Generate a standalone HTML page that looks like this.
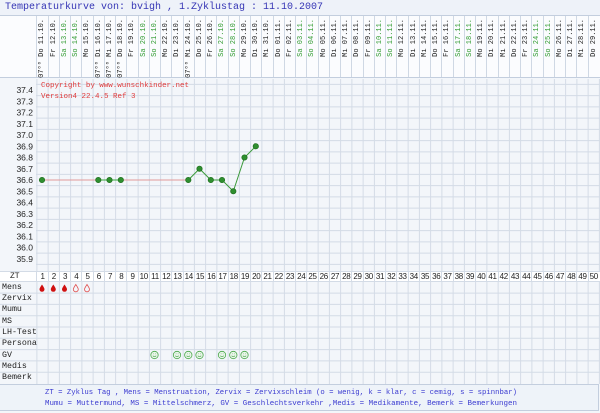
<!DOCTYPE html>
<html><head><meta charset="utf-8"><style>
*{margin:0;padding:0;box-sizing:border-box}
body{width:600px;height:413px;overflow:hidden;background:#f3f6fa;position:relative;font-family:"Liberation Mono",monospace}
.title{position:absolute;left:0;top:0;width:600px;height:16px;background:#eef2f9;border-bottom:1px solid #c3cede;color:#3535b5;font-size:10px;line-height:16px;padding-left:5px}
.hdr{position:absolute;left:0;top:16px;width:600px;height:62px;background:#fbfcfe;border-bottom:1px solid #c3cede}
.cols{position:absolute;left:36.4px;top:0;display:flex;height:100%}
.cols>div{width:11.25px;flex:none;border-left:1px solid #cfd8e4;position:relative;height:100%}
.d{position:absolute;top:3px;left:1px;writing-mode:vertical-rl;transform:rotate(180deg);font-size:7px;line-height:9px;color:#222;white-space:nowrap}
.t{position:absolute;top:45px;left:1px;writing-mode:vertical-rl;transform:rotate(180deg);font-size:7px;line-height:9px;color:#222}
.g{color:#2f9a2f}
.grid{position:absolute;left:36px;width:564px;background-image:linear-gradient(to right,#d3dbe6 1px,transparent 1px);background-size:11.25px 100%;background-position:0.4px 0}
.zt{position:absolute;left:0;top:270.5px;width:600px;height:11.3px;background:#fff;border-top:1px solid #d3dbe6;border-bottom:1px solid #d3dbe6}
.ztc{position:absolute;left:36.4px;top:0;display:flex;height:100%}
.ztc>div{width:11.25px;flex:none;border-left:1px solid #d3dbe6;text-align:center;font-family:"Liberation Sans",sans-serif;font-size:8px;line-height:10px;color:#222;letter-spacing:-0.3px}
.lab{position:absolute;left:2px;font-size:8.3px;color:#222;line-height:11.3px}
.legend{position:absolute;left:0;top:384px;width:599px;height:27px;background:#eef3f9;border-top:1px solid #c3cede;border-bottom:1px solid #c3cede;border-right:1px solid #c3cede}
</style></head><body>
<div class="title">Temperaturkurve von: bvigh , 1.Zyklustag : 11.10.2007</div>
<div class="hdr"><div class="cols">
<div><span class="d">Do 11.10.</span><span class="t">07⁰⁰</span></div>
<div><span class="d">Fr 12.10.</span></div>
<div><span class="d g">Sa 13.10.</span></div>
<div><span class="d g">So 14.10.</span></div>
<div><span class="d">Mo 15.10.</span></div>
<div><span class="d">Di 16.10.</span><span class="t">07⁰⁰</span></div>
<div><span class="d">Mi 17.10.</span><span class="t">07⁰⁰</span></div>
<div><span class="d">Do 18.10.</span><span class="t">07⁰⁰</span></div>
<div><span class="d">Fr 19.10.</span></div>
<div><span class="d g">Sa 20.10.</span></div>
<div><span class="d g">So 21.10.</span></div>
<div><span class="d">Mo 22.10.</span></div>
<div><span class="d">Di 23.10.</span></div>
<div><span class="d">Mi 24.10.</span><span class="t">07⁰⁰</span></div>
<div><span class="d">Do 25.10.</span></div>
<div><span class="d">Fr 26.10.</span></div>
<div><span class="d g">Sa 27.10.</span></div>
<div><span class="d g">So 28.10.</span></div>
<div><span class="d">Mo 29.10.</span></div>
<div><span class="d">Di 30.10.</span></div>
<div><span class="d">Mi 31.10.</span></div>
<div><span class="d">Do 01.11.</span></div>
<div><span class="d">Fr 02.11.</span></div>
<div><span class="d g">Sa 03.11.</span></div>
<div><span class="d g">So 04.11.</span></div>
<div><span class="d">Mo 05.11.</span></div>
<div><span class="d">Di 06.11.</span></div>
<div><span class="d">Mi 07.11.</span></div>
<div><span class="d">Do 08.11.</span></div>
<div><span class="d">Fr 09.11.</span></div>
<div><span class="d g">Sa 10.11.</span></div>
<div><span class="d g">So 11.11.</span></div>
<div><span class="d">Mo 12.11.</span></div>
<div><span class="d">Di 13.11.</span></div>
<div><span class="d">Mi 14.11.</span></div>
<div><span class="d">Do 15.11.</span></div>
<div><span class="d">Fr 16.11.</span></div>
<div><span class="d g">Sa 17.11.</span></div>
<div><span class="d g">So 18.11.</span></div>
<div><span class="d">Mo 19.11.</span></div>
<div><span class="d">Di 20.11.</span></div>
<div><span class="d">Mi 21.11.</span></div>
<div><span class="d">Do 22.11.</span></div>
<div><span class="d">Fr 23.11.</span></div>
<div><span class="d g">Sa 24.11.</span></div>
<div><span class="d g">So 25.11.</span></div>
<div><span class="d">Mo 26.11.</span></div>
<div><span class="d">Di 27.11.</span></div>
<div><span class="d">Mi 28.11.</span></div>
<div><span class="d">Do 29.11.</span></div>
</div></div>

<div class="grid" style="top:79px;height:191.5px"></div>
<div class="grid" style="top:281.8px;height:102.2px"></div>

<svg style="position:absolute;left:0;top:0" width="600" height="413">
<g stroke="#d3dbe6" stroke-width="1">
<line x1="36" x2="600" y1="84.4" y2="84.4"/><line x1="36" x2="600" y1="95.6" y2="95.6"/><line x1="36" x2="600" y1="106.9" y2="106.9"/><line x1="36" x2="600" y1="118.1" y2="118.1"/><line x1="36" x2="600" y1="129.4" y2="129.4"/><line x1="36" x2="600" y1="140.6" y2="140.6"/><line x1="36" x2="600" y1="151.9" y2="151.9"/><line x1="36" x2="600" y1="163.1" y2="163.1"/><line x1="36" x2="600" y1="174.4" y2="174.4"/><line x1="36" x2="600" y1="185.6" y2="185.6"/><line x1="36" x2="600" y1="196.9" y2="196.9"/><line x1="36" x2="600" y1="208.1" y2="208.1"/><line x1="36" x2="600" y1="219.4" y2="219.4"/><line x1="36" x2="600" y1="230.6" y2="230.6"/><line x1="36" x2="600" y1="241.9" y2="241.9"/><line x1="36" x2="600" y1="253.1" y2="253.1"/><line x1="36" x2="600" y1="264.4" y2="264.4"/>
<line x1="0" x2="600" y1="293.1" y2="293.1"/><line x1="0" x2="600" y1="304.4" y2="304.4"/><line x1="0" x2="600" y1="315.7" y2="315.7"/><line x1="0" x2="600" y1="327" y2="327"/><line x1="0" x2="600" y1="338.3" y2="338.3"/><line x1="0" x2="600" y1="349.6" y2="349.6"/><line x1="0" x2="600" y1="360.9" y2="360.9"/><line x1="0" x2="600" y1="372.2" y2="372.2"/>
</g>
<g font-family="Liberation Sans,sans-serif" font-size="8.5" fill="#222" text-anchor="end">
<text x="33" y="93">37.4</text><text x="33" y="104.3">37.3</text><text x="33" y="115.5">37.2</text><text x="33" y="126.8">37.1</text><text x="33" y="138">37.0</text><text x="33" y="149.3">36.9</text><text x="33" y="160.5">36.8</text><text x="33" y="171.8">36.7</text><text x="33" y="183">36.6</text><text x="33" y="194.3">36.5</text><text x="33" y="205.5">36.4</text><text x="33" y="216.8">36.3</text><text x="33" y="228">36.2</text><text x="33" y="239.3">36.1</text><text x="33" y="250.5">36.0</text><text x="33" y="261.8">35.9</text>
</g>
<g font-family="Liberation Mono,monospace" font-size="7.5" fill="#e03a3a">
<text x="41" y="87" textLength="148">Copyright by www.wunschkinder.net</text>
<text x="41" y="98">Version4 22.4.5 Ref 3</text>
</g>
<polyline points="42,180 98.3,180" fill="none" stroke="#e29a9a" stroke-width="1"/>
<polyline points="120.8,180 188.3,180" fill="none" stroke="#e29a9a" stroke-width="1"/>
<polyline points="98.3,180 120.8,180" fill="none" stroke="#3aa83a" stroke-width="1"/>
<polyline points="188.3,180 199.5,168.75 210.8,180 222,180 233.3,191.25 244.5,157.5 255.8,146.25" fill="none" stroke="#3a9a3a" stroke-width="1"/>
<g fill="#2f8f2f" stroke="#1f6f1f" stroke-width="0.7">
<circle cx="42" cy="180" r="2.7"/><circle cx="98.3" cy="180" r="2.7"/><circle cx="109.5" cy="180" r="2.7"/><circle cx="120.8" cy="180" r="2.7"/><circle cx="188.3" cy="180" r="2.7"/><circle cx="199.5" cy="168.75" r="2.7"/><circle cx="210.8" cy="180" r="2.7"/><circle cx="222" cy="180" r="2.7"/><circle cx="233.3" cy="191.25" r="2.7"/><circle cx="244.5" cy="157.5" r="2.7"/><circle cx="255.8" cy="146.25" r="2.7"/>
</g>
<g>
<path d="M42,284.5 C40,287.5 39.5,288.5 39.5,289.3 A2.5,2.5 0 0 0 44.5,289.3 C44.5,288.5 44,287.5 42,284.5Z" fill="#d01010"/>
<path d="M53.3,284.5 C51.3,287.5 50.8,288.5 50.8,289.3 A2.5,2.5 0 0 0 55.8,289.3 C55.8,288.5 55.3,287.5 53.3,284.5Z" fill="#d01010"/>
<path d="M64.5,284.5 C62.5,287.5 62,288.5 62,289.3 A2.5,2.5 0 0 0 67,289.3 C67,288.5 66.5,287.5 64.5,284.5Z" fill="#d01010"/>
<path d="M75.8,284.5 C73.8,287.5 73.3,288.5 73.3,289.3 A2.5,2.5 0 0 0 78.3,289.3 C78.3,288.5 77.8,287.5 75.8,284.5Z" fill="none" stroke="#e05050" stroke-width="0.8"/>
<path d="M87,284.5 C85,287.5 84.5,288.5 84.5,289.3 A2.5,2.5 0 0 0 89.5,289.3 C89.5,288.5 89,287.5 87,284.5Z" fill="none" stroke="#e05050" stroke-width="0.8"/>
</g>
<g fill="#eaf5ea" stroke="#4aa84a" stroke-width="0.8">
<circle cx="154.5" cy="355" r="3.7"/><circle cx="177" cy="355" r="3.7"/><circle cx="188.3" cy="355" r="3.7"/><circle cx="199.5" cy="355" r="3.7"/><circle cx="222" cy="355" r="3.7"/><circle cx="233.3" cy="355" r="3.7"/><circle cx="244.5" cy="355" r="3.7"/>
</g>
<g stroke="#4aa84a" stroke-width="0.7" fill="none">
<path d="M152.8,355.8 Q154.5,357.6 156.2,355.8 M153.3,353.8h0.6 M155.3,353.8h0.6"/>
<path d="M175.3,355.8 Q177,357.6 178.7,355.8 M175.8,353.8h0.6 M177.8,353.8h0.6"/>
<path d="M186.6,355.8 Q188.3,357.6 190,355.8 M187.1,353.8h0.6 M189.1,353.8h0.6"/>
<path d="M197.8,355.8 Q199.5,357.6 201.2,355.8 M198.3,353.8h0.6 M200.3,353.8h0.6"/>
<path d="M220.3,355.8 Q222,357.6 223.7,355.8 M220.8,353.8h0.6 M222.8,353.8h0.6"/>
<path d="M231.6,355.8 Q233.3,357.6 235,355.8 M232.1,353.8h0.6 M234.1,353.8h0.6"/>
<path d="M242.8,355.8 Q244.5,357.6 246.2,355.8 M243.3,353.8h0.6 M245.3,353.8h0.6"/>
</g>
</svg>

<div class="zt"><span class="lab" style="left:10px;top:-1px;font-size:8px;line-height:11px">ZT</span><div class="ztc">
<div>1</div><div>2</div><div class="g">3</div><div class="g">4</div><div>5</div><div>6</div><div>7</div><div>8</div><div>9</div><div class="g">10</div><div class="g">11</div><div>12</div><div>13</div><div>14</div><div>15</div><div>16</div><div class="g">17</div><div class="g">18</div><div>19</div><div>20</div><div>21</div><div>22</div><div>23</div><div class="g">24</div><div class="g">25</div><div>26</div><div>27</div><div>28</div><div>29</div><div>30</div><div class="g">31</div><div class="g">32</div><div>33</div><div>34</div><div>35</div><div>36</div><div>37</div><div class="g">38</div><div class="g">39</div><div>40</div><div>41</div><div>42</div><div>43</div><div>44</div><div class="g">45</div><div class="g">46</div><div>47</div><div>48</div><div>49</div><div>50</div>
</div></div>

<span class="lab" style="top:281.8px">Mens</span>
<span class="lab" style="top:293.1px">Zervix</span>
<span class="lab" style="top:304.4px">Mumu</span>
<span class="lab" style="top:315.7px">MS</span>
<span class="lab" style="top:327px">LH-Test</span>
<span class="lab" style="top:338.3px">Persona</span>
<span class="lab" style="top:349.6px">GV</span>
<span class="lab" style="top:360.9px">Medis</span>
<span class="lab" style="top:372.2px">Bemerk</span>

<div class="legend"></div>
<svg style="position:absolute;left:0;top:0" width="600" height="413">
<g font-family="Liberation Mono,monospace" font-size="7.5" fill="#3a3ad0">
<text x="45" y="394" textLength="472" lengthAdjust="spacingAndGlyphs">ZT = Zyklus Tag , Mens = Menstruation, Zervix = Zervixschleim (o = wenig, k = klar, c = cemig, s = spinnbar)</text>
<text x="45" y="405" textLength="472" lengthAdjust="spacingAndGlyphs">Mumu = Muttermund, MS = Mittelschmerz, GV = Geschlechtsverkehr ,Medis = Medikamente, Bemerk = Bemerkungen</text>
</g>
</svg>
</body></html>
